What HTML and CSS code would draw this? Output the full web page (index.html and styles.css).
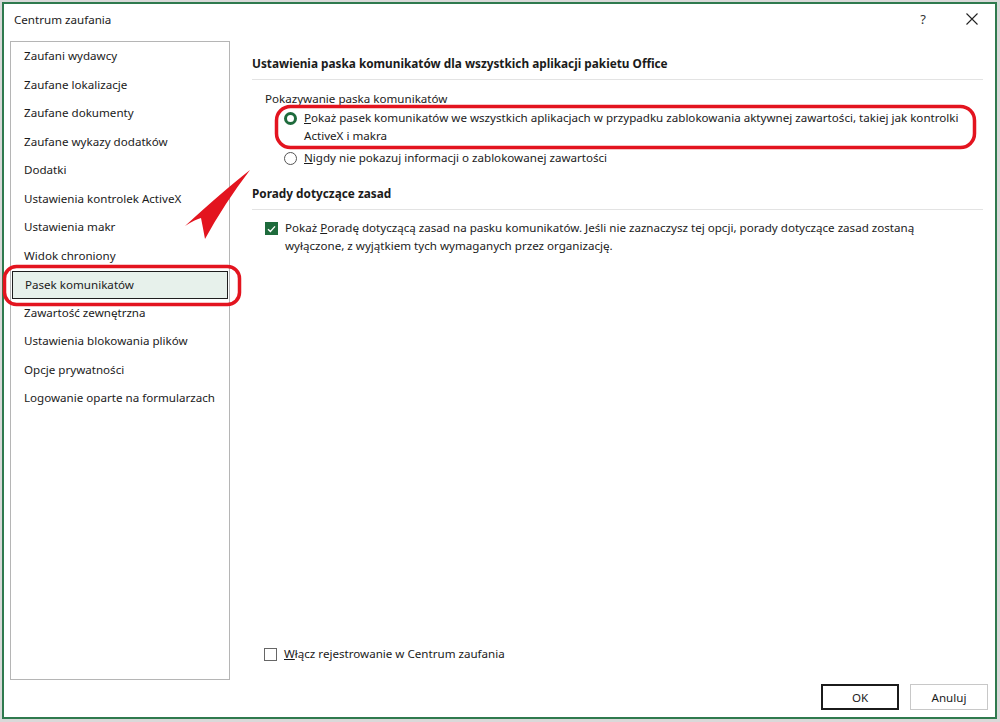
FILE: index.html
```html
<!DOCTYPE html>
<html lang="pl">
<head>
    <meta charset="UTF-8">
    <title>Centrum zaufania</title>
    <link rel="stylesheet" href="styles.css">
</head>
<body>
<div class="dialog">
    <div class="titlebar">
        <div class="title">Centrum zaufania</div>
        <div class="tb-buttons">
            <span class="help">?</span>
            <svg class="close" width="12" height="12" viewBox="0 0 12 12">
                <path d="M0.5 0.5 L11.5 11.5 M11.5 0.5 L0.5 11.5" stroke="#222" stroke-width="1.1" fill="none"/>
            </svg>
        </div>
    </div>

    <div class="body">
        <ul class="sidebar">
            <li>Zaufani wydawcy</li>
            <li>Zaufane lokalizacje</li>
            <li>Zaufane dokumenty</li>
            <li>Zaufane wykazy dodatków</li>
            <li>Dodatki</li>
            <li>Ustawienia kontrolek ActiveX</li>
            <li>Ustawienia makr</li>
            <li>Widok chroniony</li>
            <li class="selected">Pasek komunikatów</li>
            <li>Zawartość zewnętrzna</li>
            <li>Ustawienia blokowania plików</li>
            <li>Opcje prywatności</li>
            <li>Logowanie oparte na formularzach</li>
        </ul>

        <div class="content">
            <div class="section-head">Ustawienia paska komunikatów dla wszystkich aplikacji pakietu Office</div>
            <div class="group-label">Pokazywanie paska komunikatów</div>
            <div class="option first">
                <span class="radio checked"></span>
                <span class="opt-text"><u>P</u>okaż pasek komunikatów we wszystkich aplikacjach w przypadku zablokowania aktywnej zawartości, takiej jak kontrolki ActiveX i makra</span>
            </div>
            <div class="option">
                <span class="radio"></span>
                <span class="opt-text"><u>N</u>igdy nie pokazuj informacji o zablokowanej zawartości</span>
            </div>

            <div class="section-head second">Porady dotyczące zasad</div>
            <div class="check-row">
                <span class="check on">
                    <svg width="9" height="8" viewBox="0 0 9 8"><path d="M1 4.2 L3.4 6.4 L8 1.4" stroke="#fff" stroke-width="1.4" fill="none"/></svg>
                </span>
                <span class="opt-text">Pokaż <u>P</u>oradę dotyczącą zasad na pasku komunikatów. Jeśli nie zaznaczysz tej opcji, porady dotyczące zasad zostaną wyłączone, z wyjątkiem tych wymaganych przez organizację.</span>
            </div>

            <div class="spacer"></div>

            <div class="check-row bottom">
                <span class="check"></span>
                <span class="opt-text"><u>W</u>łącz rejestrowanie w Centrum zaufania</span>
            </div>
        </div>
    </div>

    <div class="footer">
        <button class="btn default">OK</button>
        <button class="btn">Anuluj</button>
    </div>
</div>

<!-- red annotations drawn over the dialog -->
<svg class="marks" width="1000" height="722" viewBox="0 0 1000 722">
    <rect x="4.5" y="266.5" width="235" height="38" rx="12" fill="none" stroke="#e3141f" stroke-width="3.5"/>
    <rect x="276.5" y="106.5" width="698" height="41" rx="14" fill="none" stroke="#e3141f" stroke-width="3.5"/>
    <path d="M250 170 Q222 192 185 226 Q196 219 201 218 Q203 228 205 239 Q224 204 250 170 Z" fill="#e3141f"/>
</svg>
</body>
</html>
```

FILE: styles.css
```css
body {
    margin: 0;
    width: 1000px;
    height: 722px;
    overflow: hidden;
    background-color: #d9d9d9;
    font-family: "Noto Sans", "Open Sans", sans-serif;
    font-size: 11.6px;
    color: #1b1b1b;
    position: relative;
}

.dialog {
    box-sizing: border-box;
    margin: 2px 0 0 2px;
    width: 995px;
    height: 717px;
    border: 2px solid #2f7a4e;
    background-color: #fff;
    display: flex;
    flex-direction: column;
}

.titlebar {
    height: 30px;
    display: flex;
    align-items: center;
    justify-content: space-between;
    padding-left: 10px;
    flex-shrink: 0;
}

.title {
    color: #1b1b1b;
}

.tb-buttons {
    display: flex;
    align-items: center;
    gap: 40px;
    padding-right: 17px;
}

.help {
    font-size: 13px;
    color: #333;
}

.body {
    flex: 1;
    display: flex;
    padding: 7px 0 0 6px;
    min-height: 0;
}

.sidebar {
    list-style: none;
    margin: 0;
    padding: 0;
    width: 220px;
    box-sizing: border-box;
    border: 1px solid #b5b5b5;
    flex-shrink: 0;
}

.sidebar li {
    height: 28.5px;
    line-height: 28.5px;
    padding-left: 13px;
    box-sizing: border-box;
    white-space: nowrap;
}

.sidebar li.selected {
    margin: 1px 1px 0;
    height: 27.5px;
    line-height: 25.5px;
    padding-left: 12px;
    border: 1px solid #1e1e1e;
    background-color: #e7f1eb;
}

.content {
    flex: 1;
    display: flex;
    flex-direction: column;
    padding: 13px 12px 17px 22px;
}

.section-head {
    font-weight: 700;
    font-size: 11.8px;
    line-height: 18px;
    padding-bottom: 7px;
    border-bottom: 1px solid #e3e3e3;
}

.section-head.second {
    margin-top: 17px;
}

.group-label {
    margin: 10px 0 0 13px;
    line-height: 18px;
}

.option {
    display: flex;
    align-items: flex-start;
    line-height: 18px;
    margin-top: 4px;
    padding: 0 16px 0 32px;
}

.option.first {
    margin-top: 1px;
}

.radio {
    box-sizing: border-box;
    width: 13px;
    height: 13px;
    border: 1px solid #555;
    border-radius: 50%;
    margin: 3px 7px 0 0;
    flex-shrink: 0;
}

.radio.checked {
    border: 3.5px solid #1e6b3c;
}

.opt-text {
    line-height: 18px;
}

.check-row {
    display: flex;
    align-items: flex-start;
    margin: 9px 0 0 13px;
    padding-right: 16px;
    line-height: 18px;
}

.check {
    box-sizing: border-box;
    width: 13px;
    height: 13px;
    border: 1px solid #666;
    margin: 3px 7px 0 0;
    flex-shrink: 0;
    display: flex;
    align-items: center;
    justify-content: center;
}

.check.on {
    background-color: #1e6b3c;
    border-color: #1e6b3c;
}

.spacer {
    flex: 1;
}

.check-row.bottom {
    margin-left: 12px;
}

.footer {
    height: 37px;
    display: flex;
    justify-content: flex-end;
    gap: 11px;
    padding: 4px 7px 0 0;
    box-sizing: border-box;
    flex-shrink: 0;
}

.btn {
    width: 78px;
    height: 26px;
    font-family: inherit;
    font-size: 11.6px;
    color: #1b1b1b;
    background-color: #fff;
    border: 1px solid #c8c8c8;
    padding: 0;
}

.btn.default {
    border: 2px solid #1b1b1b;
}

.marks {
    position: absolute;
    top: 0;
    left: 0;
    pointer-events: none;
}
```
